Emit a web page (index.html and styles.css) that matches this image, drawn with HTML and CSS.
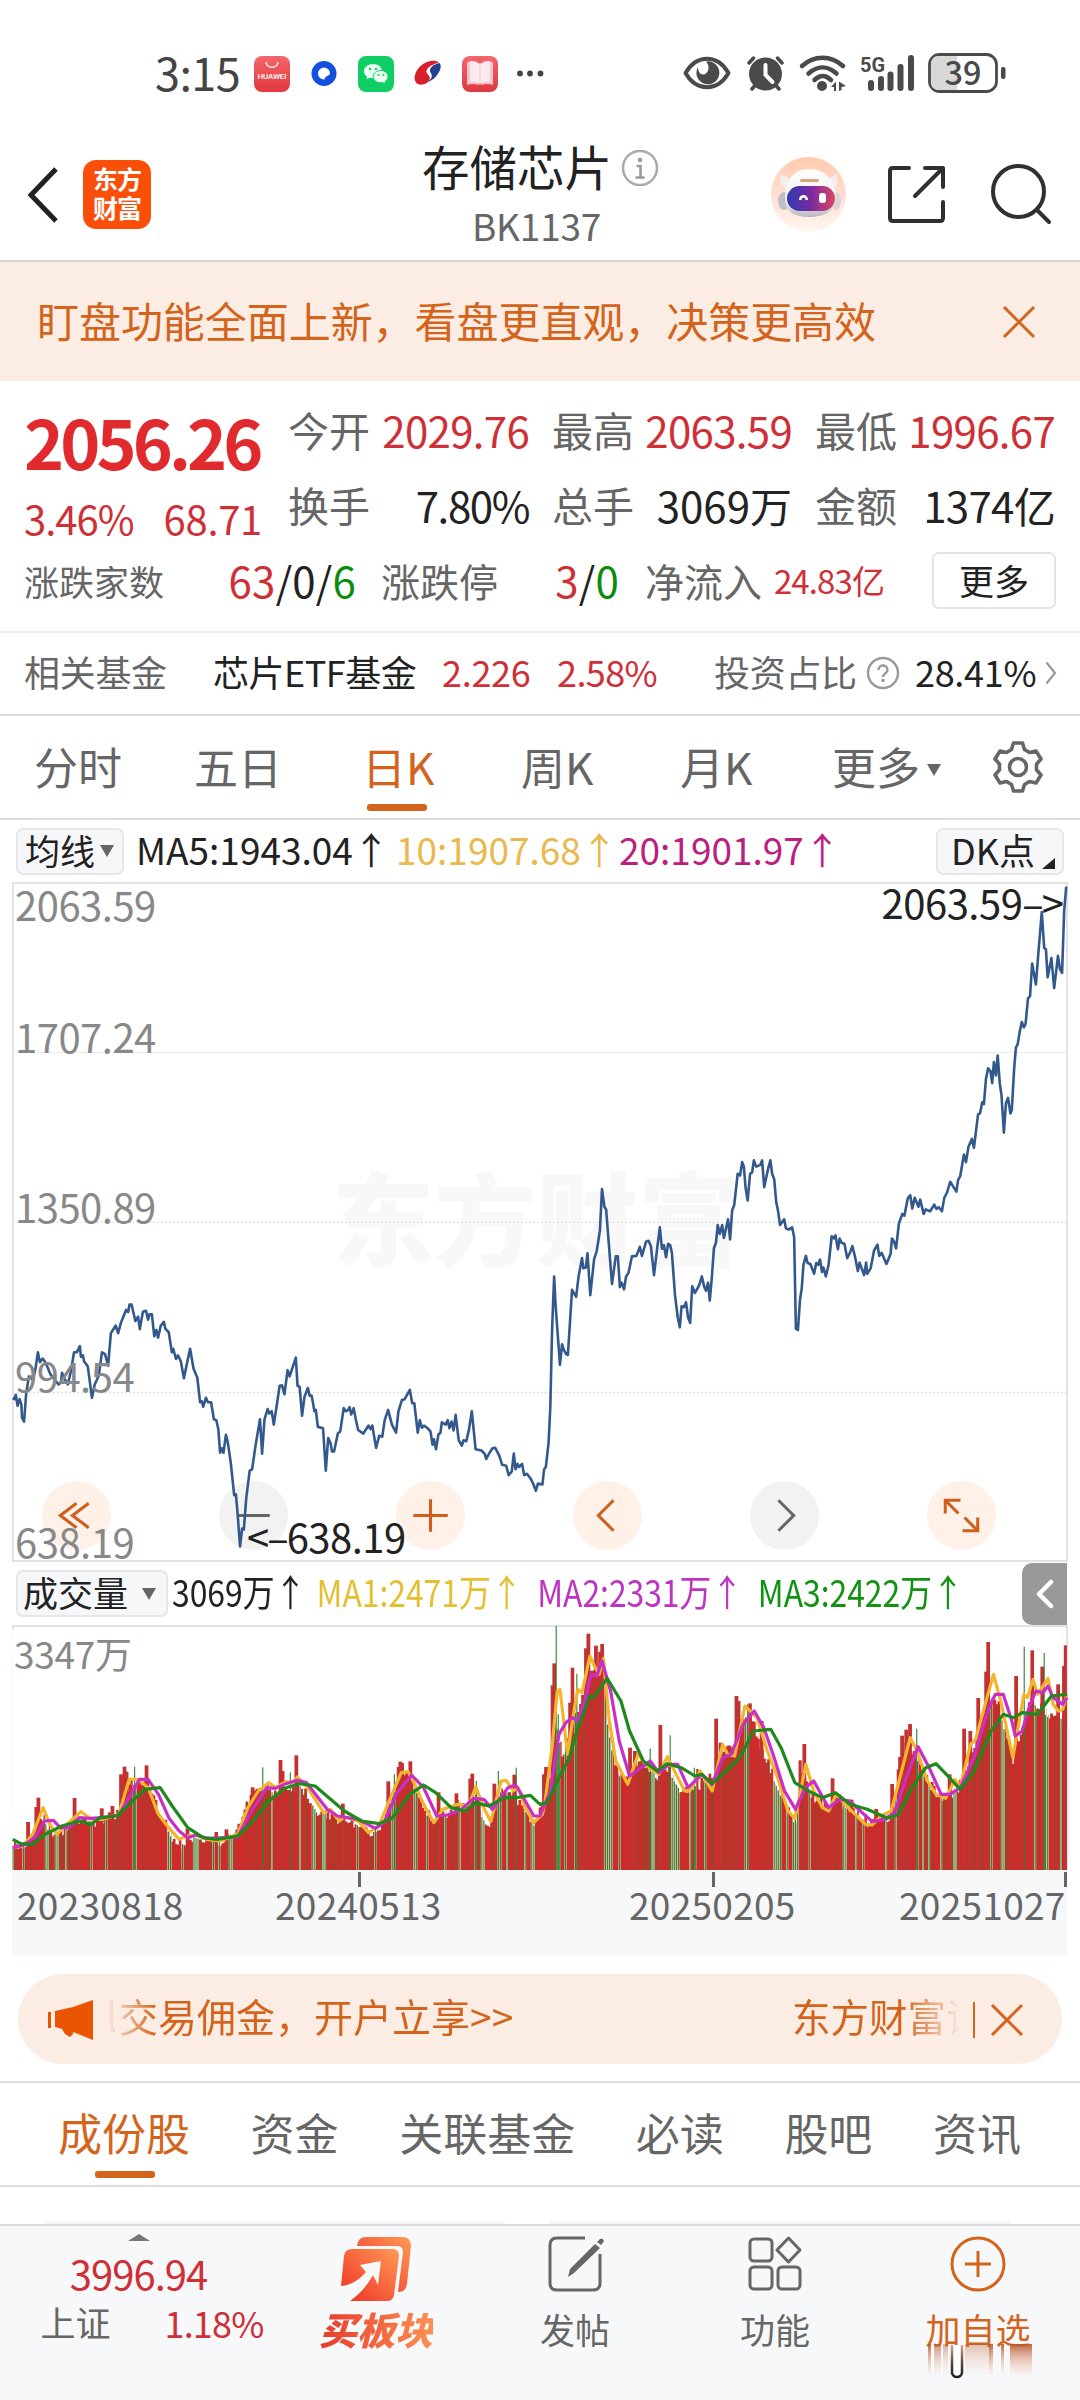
FILE: index.html
```html
<!DOCTYPE html>
<html lang="zh-CN">
<head>
<meta charset="utf-8">
<title>存储芯片 BK1137</title>
<link rel="stylesheet" href="styles.css">
</head>
<body>
<div class="status">
  <span class="clock">3:15</span>
  <svg class="status-apps" viewBox="0 0 300 44" width="300" height="44">
    <defs>
      <linearGradient id="redApp" x1="0" y1="0" x2="0" y2="1"><stop offset="0" stop-color="#f4666a"/><stop offset="1" stop-color="#e2383f"/></linearGradient>
    </defs>
    <rect x="4" y="4" width="36" height="36" rx="8" fill="url(#redApp)"/>
    <path d="M16 10c1 7 11 7 12 0" fill="none" stroke="#fff" stroke-width="1.3"/>
    <text x="7.500" y="27" class="huawei" textLength="29">HUAWEI</text>
    <circle cx="74" cy="21.500" r="12.500" fill="#1450e0"/>
    <path d="M80 21.500a6 6 0 1 0-6 6c1.200-.2.800-2.200 2.200-3s3.800-1.200 3.800-3z" fill="#fff"/>
    <rect x="108" y="4" width="36" height="36" rx="8" fill="#0fce66"/>
    <path d="M123 12c-5 0-9 3.200-9 7.200 0 2.300 1.300 4.200 3.200 5.500l-.8 2.600 3.200-1.500c6 1.500 12-1.500 12.500-6.600 0-4-4-7.200-9.100-7.200z" fill="#e9fff2"/>
    <path d="M131 18.500c-4.500 0-7.800 2.800-7.800 6.200 0 4 4.300 6.800 9.600 5.900l2.800 1.400-.6-2.400c1.900-1.100 3-2.900 3-4.900 0-3.400-2.800-6.200-7-6.200z" fill="#e9fff2" stroke="#0fce66" stroke-width="1"/>
    <g fill="#0fce66"><circle cx="120" cy="17" r="1.200"/><circle cx="126" cy="17" r="1.200"/><circle cx="128.500" cy="23" r="1"/><circle cx="133.500" cy="23" r="1"/></g>
    <path d="M189 10.500c-4-3-13-2-19 4-5 5-7 12-4 16 3 4 11 2 13-2 2-3 0-5-2-7-2-3 1-8 12-11z" fill="#d91f2b"/>
    <path d="M189.500 11c3 3 0 10-4 14-2.500 2.500-5 4-7.500 5 4-4 5-6 2.500-9.500-2-3 1-8 9-9.500z" fill="#23418f"/>
    <rect x="212" y="4" width="36" height="36" rx="8" fill="url(#redApp)"/>
    <path d="M217 10q6-1 12 2v21q-6-2-12 0zM243 10q-6-1-12 2v21q6-2 12 0z" fill="#f6c3d2"/>
    <path d="M220 9q6 0 10 3v20q-4-3-10-2zM240 9q-6 0-10 3v20q4-3 10-2z" fill="#fdeaf1" stroke="#f6ccd9" stroke-width=".6"/>
    <g fill="#444"><circle cx="270" cy="21.500" r="2.900"/><circle cx="280" cy="21.500" r="2.900"/><circle cx="290.500" cy="21.500" r="2.900"/></g>
  </svg>
  <svg class="status-sys" viewBox="680 48 330 48" width="330" height="48">
    <g fill="none" stroke="#4a4a4a" stroke-linecap="round" stroke-linejoin="round">
      <path d="M685.500 73c11-19 32-19 43 0-11 19-32 19-43 0z" stroke-width="4"/>
      <path d="M749 63l4.500-5M782 63l-4.500-5M752 89l3-3.500M779 89l-3-3.500" stroke-width="3.500"/>
      <path d="M802 66c12-11 29-11 41 0" stroke-width="4.500"/>
      <path d="M808.500 73.500c9-8 19-8 28 0" stroke-width="4.500"/>
      <path d="M814.500 80c6-5.500 10.500-5.500 16.500 0" stroke-width="4.500"/>
      <path d="M871 83v5M881 79v9M890.500 74.500v13.500M900.500 67v21M911 58v30" stroke-width="6"/>
      <rect x="929.500" y="54.500" width="67" height="37" rx="10" stroke-width="2.800"/>
    </g>
    <path d="M698 67a11.500 11.500 0 1 0 8-5.500c5 5 2 13-3 13-3 0-5-3-5-7.500z" fill="#4a4a4a"/>
    <circle cx="765.500" cy="74" r="16.500" fill="#4a4a4a"/>
    <path d="M765.500 65v10l7 7" fill="none" stroke="#fff" stroke-width="4" stroke-linecap="round"/>
    <circle cx="822" cy="86" r="5" fill="#4a4a4a"/>
    <path d="M831 87l5-5.500v9.500h-2v-4zM839 91v-9.500l7 4.500-4.500 1v3z" fill="#4a4a4a"/>
    <text x="860" y="72" class="net" textLength="25" lengthAdjust="spacingAndGlyphs">5G</text>
    <path d="M938 56h19v34h-19a7 7 0 0 1-7-7V63a7 7 0 0 1 7-7z" fill="#d8d8d8"/>
    <rect x="1001" y="67" width="4.500" height="12" rx="2" fill="#4a4a4a"/>
    <text x="944.500" y="84.500" class="batt" textLength="37" lengthAdjust="spacingAndGlyphs">39</text>
  </svg>
</div>

<header class="header">
  <svg class="back" width="40" height="62" viewBox="0 0 40 62"><path d="M32 5L7 31l25 26" fill="none" stroke="#222" stroke-width="5"/></svg>
  <div class="logo"><span>东方</span><span>财富</span></div>
  <div class="title">
    <div class="title-line">存储芯片
      <svg width="38" height="38" viewBox="0 0 38 38"><circle cx="19" cy="19" r="17" fill="none" stroke="#aaa" stroke-width="2.500"/><circle cx="19" cy="11" r="2.300" fill="#999"/><path d="M15.500 17h4v11M14.500 28.500h9" fill="none" stroke="#999" stroke-width="2.500"/></svg>
    </div>
    <div class="code">BK1137</div>
  </div>
  <svg class="actions" width="300" height="80" viewBox="760 154 300 80">
    <defs>
      <linearGradient id="halo" x1="0" y1="0" x2="0" y2="1"><stop offset="0" stop-color="#ffc9ae"/><stop offset="1" stop-color="#fff6f1"/></linearGradient>
      <linearGradient id="visor" x1="0" y1="0" x2="1" y2="0"><stop offset="0" stop-color="#2e3cae"/><stop offset=".5" stop-color="#7a2aa2"/><stop offset="1" stop-color="#dd4660"/></linearGradient>
      <linearGradient id="helmet" x1="0" y1="0" x2="0" y2="1"><stop offset="0" stop-color="#fff"/><stop offset=".7" stop-color="#eeebf0"/><stop offset="1" stop-color="#b9b6c0"/></linearGradient>
    </defs>
    <circle cx="808.500" cy="194.500" r="37.500" fill="url(#halo)"/>
    <path d="M780 174l9 4-3 11-5-4zM837 174l-8 4 3 11 5-4z" fill="#f3eeee"/>
    <ellipse cx="784" cy="201" rx="6" ry="9" fill="#bfbcc4"/><ellipse cx="836" cy="201" rx="5" ry="9" fill="#dcd3d8"/>
    <path d="M785 198c0-17 8-29 24-29s27 12 27 28c0 14-11 20-27 20s-24-6-24-19z" fill="url(#helmet)"/>
    <rect x="800" y="179" width="19" height="3" rx="1.500" fill="#dba27f"/>
    <rect x="787" y="186" width="48" height="25" rx="12.500" fill="url(#visor)"/>
    <path d="M800 200c1-5 6-5 7 0" fill="none" stroke="#fff" stroke-width="2.500"/><rect x="819" y="193" width="7" height="10" rx="3" fill="#fff"/>
    <g fill="none" stroke="#303030" stroke-width="4" stroke-linecap="round" stroke-linejoin="round">
      <path d="M909 168h-16q-3 0-3 3v47q0 3 3 3h47q3 0 3-3v-16M925 168h18v19M943 168l-28 28"/>
      <circle cx="1018.500" cy="191.500" r="25.500"/><path d="M1037 210l12 12"/>
    </g>
  </svg>
</header>

<div class="banner">
  <span>盯盘功能全面上新，看盘更直观，决策更高效</span>
  <svg width="34" height="34" viewBox="0 0 34 34"><path d="M2 2l30 30M32 2L2 32" stroke="#d4641c" stroke-width="3"/></svg>
</div>

<section class="quote">
  <div class="quote-top">
    <div class="price-col red">
      <div class="price">2056.26</div>
      <div class="change"><span>3.46%</span><span>68.71</span></div>
    </div>
    <div class="stats">
      <div class="stat"><label>今开</label><b class="red">2029.76</b></div>
      <div class="stat"><label>最高</label><b class="red">2063.59</b></div>
      <div class="stat"><label>最低</label><b class="red">1996.67</b></div>
      <div class="stat"><label>换手</label><b class="tight">7.80%</b></div>
      <div class="stat"><label>总手</label><b class="wide">3069万</b></div>
      <div class="stat"><label>金额</label><b>1374亿</b></div>
    </div>
  </div>
  <div class="breadth">
    <div class="pair p1"><label>涨跌家数</label><b><i class="red">63</i>/0/<i class="green">6</i></b></div>
    <div class="pair p2"><label>涨跌停</label><b><i class="red">3</i>/<i class="green">0</i></b></div>
    <div class="pair p3"><label>净流入</label><b class="red">24.83亿</b></div>
    <button class="more">更多</button>
  </div>
</section>

<div class="fund">
  <label>相关基金</label><span class="f-name">芯片ETF基金</span><span class="f-val red">2.226</span><span class="f-pct red">2.58%</span>
  <label class="f-ratio">投资占比</label>
  <svg class="q" width="34" height="34" viewBox="0 0 34 34"><circle cx="17" cy="17" r="15" fill="none" stroke="#999" stroke-width="2.400"/><path d="M12.500 14c0-6 9-6 9 0 0 3.500-4.500 3.500-4.500 7" fill="none" stroke="#999" stroke-width="2.400"/><circle cx="17" cy="24.500" r="1.700" fill="#999"/></svg>
  <span class="f-num">28.41%</span>
  <svg class="chev" width="12" height="24" viewBox="0 0 12 24"><path d="M1.500 1.500L10 12 1.500 22.500" fill="none" stroke="#999" stroke-width="2.200"/></svg>
</div>

<nav class="periods">
  <span>分时</span><span>五日</span><span class="on">日K</span><span>周K</span><span>月K</span><span class="more-tab">更多<i class="tri"></i></span>
  <svg width="54" height="54" viewBox="0 0 54 54"><g fill="none" stroke="#666" stroke-width="3.600" stroke-linejoin="round"><path d="M22.500 3h9l2 6.500 5 3 6.500-1.500 5 8-4.500 5.200v5.600L50 35l-5 8-6.500-1.500-5 3-2 6.500h-9l-2-6.500-5-3L9 43l-5-8 4.500-5.200v-5.600L4 19l5-8 6.500 1.500 5-3z"/><circle cx="27" cy="27" r="8.500"/></g></svg>
</nav>

<div class="ma-row">
  <span class="pill ma-pill">均线<i class="tri"></i></span>
  <span class="ma ma5">MA5:1943.04↑</span><span class="ma ma10">10:1907.68↑</span><span class="ma ma20">20:1901.97↑</span>
  <span class="pill dk">DK点<i class="corner"></i></span>
</div>

<div class="chart">
  <div class="watermark">东方财富</div>
  <div class="controls">
    <span class="ctl"><svg viewBox="0 0 68 68"><path d="M34 22L18 34l16 12M46 22L30 34l16 12"/></svg></span>
    <span class="ctl gray"><svg viewBox="0 0 68 68"><path d="M18 34h32"/></svg></span>
    <span class="ctl"><svg viewBox="0 0 68 68"><path d="M17 34h34M34 18v32"/></svg></span>
    <span class="ctl"><svg viewBox="0 0 68 68"><path d="M40 19L25 34l15 15"/></svg></span>
    <span class="ctl gray"><svg viewBox="0 0 68 68"><path d="M28 19l15 15-15 15"/></svg></span>
    <span class="ctl"><svg viewBox="0 0 68 68"><path d="M18 32V19h15M19 20l12 12M50 36v13H35M49 48L37 36"/></svg></span>
  </div>
  <svg class="plot" id="price" viewBox="0 0 3136 1568" preserveAspectRatio="none"></svg>
  <span class="lab l1">2063.59</span><span class="lab l2">1707.24</span><span class="lab l3">1350.89</span><span class="lab l4">994.54</span><span class="lab l5">638.19</span>
  <span class="lab mark hi">2063.59<em>–&gt;</em></span><span class="lab mark lo"><em>&lt;–</em>638.19</span>
</div>

<div class="vol-row">
  <span class="pill vol-pill">成交量<i class="tri"></i></span>
  <div class="vol-values"><span>3069万↑</span><span class="v1">MA1:2471万↑</span><span class="v2">MA2:2331万↑</span><span class="v3">MA3:2422万↑</span></div>
  <span class="collapse"><svg width="20" height="30" viewBox="0 0 20 30"><path d="M16 3L4 15l12 12" fill="none" stroke="#fff" stroke-width="4.500" stroke-linecap="round" stroke-linejoin="round"/></svg></span>
</div>
<div class="volume">
  <svg class="plot" id="vol" viewBox="0 195 3136 735" preserveAspectRatio="none"></svg>
  <span class="vol-max">3347万</span>
</div>
<div class="axis"><i class="tick t1"></i><i class="tick t2"></i><i class="tick t3"></i><span class="d0">20230818</span><span class="d1">20240513</span><span class="d2">20250205</span><span class="d3">20251027</span></div>

<div class="notice">
  <svg width="48" height="42" viewBox="0 0 48 42"><path d="M1 13h3v16H1zM8 12l18-4L46 1v40l-20-8v2l-3 3-5-3-3-5-7-2z" fill="#ea5504"/></svg>
  <div class="ticker"><span class="edge">l</span><span class="tk">交易佣金，开户立享&gt;&gt;</span><span class="tk2">东方财富证</span></div>
  <i class="bar"></i>
  <svg width="34" height="34" viewBox="0 0 34 34"><path d="M2 2l30 30M32 2L2 32" stroke="#d4641c" stroke-width="3"/></svg>
</div>

<nav class="sections"><span class="on">成份股</span><span>资金</span><span>关联基金</span><span>必读</span><span>股吧</span><span>资讯</span></nav>
<div class="list-top"><i></i><i></i></div>

<footer class="dock">
  <div class="index"><i class="up"></i><b class="red">3996.94</b><div><span>上证</span><em class="red">1.18%</em></div></div>
  <div class="item buy">
    <svg width="72" height="66" viewBox="0 0 72 66">
      <defs><linearGradient id="buyA" x1="1" y1="0" x2="0" y2="1"><stop offset="0" stop-color="#ff9a55"/><stop offset="1" stop-color="#ef2f24"/></linearGradient></defs>
      <path d="M17 10q1-9 9-9h36q9 0 9 9l-4 38q-1 8-9 8l5-40q0-6-6-6z" fill="url(#buyA)"/>
      <path d="M4 20q1-7 8-7h41q6 0 6 7l-5 39q-1 6-7 6H10c12-9 18-17 23-26l5 10 3-24-21 4 6 7C20 43 12 49 1 50z" fill="url(#buyA)"/>
    </svg>
    <span>买板块</span>
  </div>
  <div class="item">
    <svg width="60" height="60" viewBox="0 0 60 60"><g fill="none" stroke="#666" stroke-width="3"><path d="M40 4H12q-7 0-7 7v38q0 7 7 7h36q7 0 7-7V20"/></g><path d="M50 10l5 4-26 25-6 4 2-8zM52 8l3-3q3-1 4 2l-3 4z" fill="#666"/></svg>
    <span>发帖</span>
  </div>
  <div class="item">
    <svg width="60" height="60" viewBox="0 0 60 60"><g fill="none" stroke="#666" stroke-width="3" stroke-linejoin="round"><rect x="5" y="5" width="22" height="22" rx="4"/><rect x="5" y="33" width="22" height="22" rx="4"/><rect x="33" y="33" width="22" height="22" rx="4"/><path d="M43.500 4L55 16 43.500 28 32 16z"/></g></svg>
    <span>功能</span>
  </div>
  <div class="item add">
    <svg width="60" height="60" viewBox="0 0 60 60"><g fill="none" stroke="#d4641c" stroke-width="3"><circle cx="30" cy="30" r="26"/><path d="M17 30h26M30 17v26"/></g></svg>
    <span>加自选</span>
    <svg class="smear" width="110" height="36" viewBox="0 0 110 36">
      <defs>
        <linearGradient id="sm" x1="0" y1="0" x2="0" y2="1"><stop offset="0" stop-color="#b9592a" stop-opacity=".9"/><stop offset="1" stop-color="#f3c8b4" stop-opacity=".1"/></linearGradient>
        <linearGradient id="hook" x1="0" y1="0" x2="0" y2="1"><stop offset="0" stop-color="#d9a58c"/><stop offset=".6" stop-color="#4a4038"/><stop offset="1" stop-color="#222"/></linearGradient>
      </defs>
      <g fill="url(#sm)"><rect x="3" y="0" width="3" height="31"/><rect x="9" y="0" width="7" height="31" opacity=".7"/><rect x="18" y="0" width="5" height="31" opacity=".5"/><rect x="40" y="0" width="26" height="31" opacity=".4"/><rect x="64" y="0" width="4" height="31"/><rect x="76" y="0" width="3" height="31"/><rect x="85" y="0" width="22" height="31"/></g>
      <path d="M27 1v28q1 4 5 4t5-4V1" fill="#fff" stroke="url(#hook)" stroke-width="2.500"/>
    </svg>
  </div>
</footer>
<script src="chart.js"></script>
</body>
</html>
```
FILE: styles.css
```css
* { box-sizing: border-box; }
body {
  margin: 0; width: 1080px; height: 2400px; overflow: hidden; background: #fff;
  display: flex; flex-direction: column; color: #222;
  font-family: "Noto Sans CJK SC", sans-serif; line-height: 1; white-space: nowrap;
}
i, em { font-style: normal; }
b { font-weight: 400; }
svg { display: block; flex: none; }
label { color: #666; }
.red { color: #cf2f36; }
.green { color: #0c8c0c; }

.status { height: 110px; flex: none; display: flex; align-items: flex-start; padding: 50px 0 0 155px; }
.clock { width: 95px; font-size: 45px; letter-spacing: -.600px; color: #444; line-height: 43px; }
.status-apps { margin-top: 2px; }
.status-sys { margin: -2px 0 0 130px; }
.huawei { font: 500 8px Roboto, sans-serif; fill: #fff; }
.net { font: 700 21px Roboto, sans-serif; fill: #4a4a4a; }
.batt { font: 500 33px "Noto Sans CJK SC", sans-serif; fill: #4a4a4a; }

.header { height: 152px; flex: none; display: flex; border-bottom: 2px solid #d9d6d4; padding-left: 24px; }
.back { margin-top: 54px; }
.logo { width: 68px; height: 69px; margin: 50px 0 0 19px; border-radius: 13px; background: #fb4e09; color: #fff; font-size: 25px; font-weight: 700; line-height: 29px; display: flex; flex-direction: column; align-items: center; padding-top: 4px; letter-spacing: -1px; }
.title { width: 236px; margin-left: 271px; padding-top: 30px; }
.title-line { display: flex; align-items: center; gap: 9px; font-size: 47.500px; height: 52px; }
.title-line svg { margin-top: 3px; }
.code { margin-top: 15px; padding-left: 50px; font-size: 37px; color: #666; letter-spacing: -.200px; }
.actions { margin: 44px 0 0 102px; }

.banner { height: 119px; flex: none; background: #fcede4; display: flex; justify-content: space-between; align-items: center; padding: 0 44px 4px 37px; font-size: 42px; letter-spacing: -.050px; color: #d4641c; }
.banner svg { margin-top: 4px; }

.quote { height: 252px; flex: none; border-bottom: 2px solid #eee; }
.quote-top { display: flex; height: 165px; padding-left: 24px; }
.price-col { width: 236px; padding-top: 26px; }
.price { font-size: 68px; font-weight: 700; color: #e02a2e; letter-spacing: -3.900px; }
.change { display: flex; justify-content: space-between; font-size: 40px; letter-spacing: -1px; margin-top: 23px; }
.change span:last-child { letter-spacing: -.300px; margin-right: -2px; }
.stats { display: grid; grid-template-columns: 239px 238px 238px; column-gap: 25px; grid-template-rows: 75px 75px; padding-top: 11px; margin-left: 28px; }
.stat { display: flex; justify-content: space-between; align-items: center; font-size: 42px; }
.stat label { font-size: 41px; }
.stat b { letter-spacing: -.700px; margin-right: -2px; }
.stat .tight { letter-spacing: -1.400px; }
.stat .wide { letter-spacing: 0; }
.breadth { display: flex; align-items: center; padding-left: 24px; height: 68px; }
.pair { display: flex; justify-content: space-between; align-items: center; font-size: 42px; letter-spacing: .200px; }
.p1 { width: 332px; } .p1 label { font-size: 35px; letter-spacing: 0; }
.p2 { width: 238px; margin-left: 25px; } .p2 label, .p3 label { font-size: 39px; letter-spacing: 0; }
.p3 { width: 239px; margin-left: 26px; } .p3 b { font-size: 33px; letter-spacing: -.900px; }
.more { width: 124px; height: 57px; margin-left: 48px; border: 2px solid #e4e4e4; border-radius: 7px; background: #fff; font: 35px/48px "Noto Sans CJK SC", sans-serif; color: #222; padding: 0; }

.fund { height: 83px; flex: none; display: flex; align-items: center; border-bottom: 2px solid #ddd; padding: 0 0 6px 24px; font-size: 36px; letter-spacing: -.300px; }
.fund > * { flex: none; }
.fund > label:first-child { width: 189px; }
.f-name { width: 229px; letter-spacing: -.500px; }
.f-val { width: 115px; } .f-pct { width: 157px; letter-spacing: -.600px; }
.f-ratio { width: 152px; }
.q { margin-right: 15px; margin-top: 4px; }
.f-num { width: 130px; } .chev { margin-top: 4px; }

.periods { height: 104px; flex: none; display: grid; grid-template-columns: 160px 168px 159px 159px 152px 159px 54px; align-items: center; padding-left: 34px; border-bottom: 2px solid #ddd; font-size: 44px; color: #666; }
.periods > span { height: 102px; line-height: 100px; position: relative; }
.on { color: #d4641c; }
.on::after { content: ""; position: absolute; width: 60px; height: 7px; border-radius: 3px; background: #d4641c; left: 5px; bottom: 7px; }
.tri { display: inline-block; border: 7px solid transparent; border-top: 12px solid #666; border-bottom: 0; }
.more-tab .tri { margin-left: 7px; vertical-align: 9px; }

.ma-row { height: 62px; flex: none; display: flex; align-items: center; padding: 0 16px 0 16px; font-size: 37px; }
.pill { background: #f6f7f9; border: 2px solid #e5e7ea; border-radius: 7px; height: 47px; display: flex; align-items: center; padding-bottom: 4px; }
.pill .tri { margin-top: 4px; }
.ma-pill { width: 108px; font-size: 35px; padding-left: 7px; gap: 5px; margin-right: 12px; }
.ma { padding-bottom: 3px; }
.ma5 { width: 260px; } .ma10 { width: 223px; color: #e9b94e; } .ma20 { color: #bb1f80; }
.ma5, .ma10, .ma20 { flex: none; }
.dk { width: 128px; font-size: 36px; padding-left: 13px; margin-left: auto; gap: 7px; }
.corner { border-left: 13px solid transparent; border-bottom: 11px solid #222; align-self: flex-end; }

.chart { position: relative; height: 680px; flex: none; margin: 0 12px; border: 2px solid #e2e2e2; }
.plot { position: absolute; left: -14px; width: 1080px; overflow: visible; }
#price { top: -4px; height: 700px; }
.watermark { position: absolute; left: 318px; top: 280px; font-size: 102px; font-weight: 900; color: #f8f8f8; }
.controls { position: absolute; left: 28px; right: 70px; top: 597px; display: flex; justify-content: space-between; }
.ctl { width: 69px; height: 69px; border-radius: 50%; background: #fff0e8; }
.ctl.gray { background: #f2f2f2; }
.ctl path { fill: none; stroke: #cf5f1c; stroke-width: 3; }
.ctl.gray path { stroke: #666; }
.lab { position: absolute; left: 1px; font-size: 40px; letter-spacing: -.500px; color: #888; }
.l1 { top: 0; } .l2 { top: 132px; } .l3 { top: 302px; } .l4 { top: 471px; } .l5 { top: 637px; }
.mark { color: #222; }
.hi { left: auto; right: 4px; top: -2px; } .lo { left: 233px; top: 632px; }
.lab em { letter-spacing: -2px; }

.vol-row { height: 63px; flex: none; display: flex; align-items: center; padding: 0 13px 0 16px; font-size: 37px; }
.vol-pill { width: 152px; font-size: 35px; padding-left: 5px; gap: 14px; }
.vol-values { display: flex; gap: 17px; margin-left: 4px; width: 850px; padding-bottom: 4px; transform: scaleX(.86); transform-origin: left; }
.v1 { color: #e6bf31; margin-left: -5px; } .v2 { color: #bd33c4; } .v3 { color: #129212; }
.collapse { width: 45px; height: 62px; background: #999; border-radius: 10px 0 0 10px; display: flex; align-items: center; justify-content: center; margin-left: auto; flex: none; }
.volume { position: relative; height: 245px; flex: none; margin: 0 12px; border: 2px solid #e2e2e2; border-bottom: 0; }
#vol { top: -1px; height: 245px; }
.vol-max { position: absolute; left: 0; top: 8px; font-size: 37px; color: #888; letter-spacing: -.300px; }
.axis { position: relative; height: 86px; flex: none; margin: 0 13px 0 12px; background: #f7f8fa; font-size: 37px; color: #666; display: flex; letter-spacing: .300px; padding-top: 16px; }
.axis span { width: 166px; flex: none; }
.d0 { margin-left: 5px; } .d1 { margin-left: 92px; } .d2 { margin-left: 188px; } .d3 { margin-left: 104px; }
.tick { position: absolute; top: 2px; width: 3px; height: 15px; background: #666; }
.t1 { left: 346px; } .t2 { left: 700px; } .t3 { right: 0; }

.notice { height: 90px; margin: 18px; margin-bottom: 17px; flex: none; border-radius: 45px; background: #fcede4; display: flex; align-items: center; padding: 0 38px 2px 29px; color: #d4641c; font-size: 39px; }
.ticker { display: flex; width: 856px; margin-left: 11px; overflow: hidden; height: 50px; line-height: 44px; -webkit-mask: linear-gradient(90deg, transparent 0, #000 50px, #000 795px, transparent 856px); mask: linear-gradient(90deg, transparent 0, #000 50px, #000 795px, transparent 856px); }
.ticker span { flex: none; }
.edge { width: 13px; } .tk { width: 673px; } .tk2 { font-size: 38.500px; }
.bar { width: 2px; height: 36px; background: #d4641c; margin: 4px 15px 0 14px; }
.notice svg { margin-top: 3px; }

.sections { height: 106px; flex: none; border-top: 2px solid #ddd; border-bottom: 2px solid #ddd; display: flex; justify-content: space-between; padding: 0 59px 0 58px; font-size: 44px; color: #666; line-height: 99px; }
.sections span { position: relative; }
.sections .on::after { left: 37px; bottom: 7px; }
.sections .on { height: 102px; }
.list-top { height: 37px; flex: none; display: flex; align-items: flex-end; gap: 45px; padding-left: 45px; }
.list-top i { width: 460px; height: 3px; background: #f7f7f7; }

.dock { height: 176px; flex: none; background: #f6f8fa; border-top: 2px solid #dadcde; display: flex; position: relative; color: #666; font-size: 35px; }
.index { width: 277px; padding-top: 8px; display: flex; flex-direction: column; align-items: center; }
.up { border: 11px solid transparent; border-bottom: 7px solid #777; border-top: 0; }
.index b { font-size: 40px; letter-spacing: -1px; margin-top: 12px; }
.index div { display: flex; gap: 54px; margin: 11px 0 0 27px; }
.index em { font-size: 36px; letter-spacing: -.800px; }
.item { width: 200px; padding-top: 8px; display: flex; flex-direction: column; align-items: center; gap: 17px; position: relative; }
.buy { width: 198px; padding-top: 10px; gap: 7px; }
.buy span { font-size: 38px; font-weight: 900; font-style: italic; background: linear-gradient(90deg, #e93a2c, #fb9152); -webkit-background-clip: text; background-clip: text; color: transparent; line-height: 40px; }
.item:last-child { color: #d4641c; }
.add { margin-left: 3px; }
.smear { position: absolute; left: 47px; top: 118px; }
```
FILE: chart.js
```js
const NS = 'http://www.w3.org/2000/svg';
const W = 1568;

function parse(left, right) {
  const read = (s, dx) => s.trim().split(/\s+/).map(p => {
    const [x, y] = p.split(',').map(Number);
    return [x + dx, y];
  });
  return read(left, 0).concat(read(right, W));
}
function add(svg, tag, attrs) {
  const el = document.createElementNS(NS, tag);
  for (const k in attrs) el.setAttribute(k, attrs[k]);
  svg.appendChild(el);
}
function line(svg, pts, color, width) {
  add(svg, 'polyline', { points: pts.map(p => p.join(',')).join(' '), fill: 'none', stroke: color, 'stroke-width': width, 'vector-effect': 'non-scaling-stroke', 'stroke-linejoin': 'round' });
}

// Daily closing price
const price = parse(`37,1160 42,1163 46,1153 51,1178 57,1163 62,1175 64,1205 70,1213 76,1150 84,1112 96,1120 103,1095 110,1058 116,1080 124,1072 133,1082 147,1108 170,1130 177,1125 180,1104 188,1118 197,1130 206,1100 215,1058 223,1058 232,1044 235,1068 241,1065 244,1078 255,1090 267,1160 275,1130 287,1110 296,1058 305,1062 314,1088 322,1015 336,998 343,1015 352,990 366,963 372,968 376,951 382,951 393,988 401,978 406,1006 415,967 424,965 430,985 434,973 441,973 448,1022 454,1008 459,1025 467,998 476,990 480,1005 490,1013 499,1058 503,1050 511,1073 517,1065 525,1078 534,1116 541,1090 552,1050 562,1095 573,1115 581,1170 586,1168 590,1180 598,1160 604,1170 613,1170 621,1208 628,1210 634,1230 639,1283 644,1273 649,1283 656,1243 662,1262 670,1305 680,1378 685,1376 690,1420 697,1493 703,1453 708,1455 715,1385 725,1323 732,1320 743,1262 755,1208 761,1285 768,1208 777,1185 782,1195 789,1190 795,1220 804,1175 812,1133 819,1132 826,1152 835,1098 841,1112 859,1070 864,1133 870,1135 877,1200 884,1158 894,1138 899,1155 905,1155 913,1190 917,1187 923,1225 938,1228 946,1323 953,1250 960,1262 964,1280 970,1280 981,1240 988,1235 998,1183 1004,1190 1011,1187 1015,1181 1020,1197 1027,1183 1033,1208 1040,1232 1055,1240 1070,1222 1076,1230 1081,1222 1092,1272 1101,1245 1110,1247 1117,1210 1127,1187 1138,1220 1150,1238 1157,1190 1167,1165 1175,1163 1190,1142 1197,1172 1203,1172 1213,1238 1219,1210 1225,1227 1231,1222 1240,1227 1250,1235 1256,1265 1260,1253 1266,1275 1273,1242 1279,1238 1283,1215 1294,1220 1300,1210 1305,1228 1311,1213 1317,1233 1323,1198 1332,1255 1341,1267 1346,1255 1354,1257 1362,1230 1370,1190 1381,1275 1398,1278 1407,1285 1412,1297 1420,1285 1430,1273 1438,1272 1450,1290 1458,1310 1470,1312 1477,1333 1486,1325 1492,1285 1497,1320 1503,1308 1507,1315 1516,1308 1522,1333 1530,1330 1540,1340 1547,1350 1556,1368 1562,1352`,
`7,1354 12,1320 17,1315 25,1260 30,1180 35,1010 41,888 45,950 58,1086 64,1040 69,1052 76,1062 81,1064 93,918 105,934 112,888 122,847 126,870 133,868 138,836 146,930 157,850 165,830 174,785 180,692 187,732 192,738 209,905 220,843 226,843 232,912 237,902 244,917 250,888 257,880 267,843 280,842 290,822 296,842 308,810 315,808 322,820 331,885 341,820 348,778 354,826 360,818 366,845 372,815 378,818 383,835 392,930 400,980 406,1002 411,955 418,957 424,946 430,980 436,992 442,910 450,925 462,908 470,888 477,912 482,920 488,902 493,942 499,890 505,825 511,812 516,773 522,793 529,773 534,802 546,760 552,805 558,740 564,728 574,658 581,662 587,632 592,642 597,690 603,718 610,658 616,655 621,628 628,642 640,638 645,628 651,688 662,648 669,628 674,658 680,670 686,722 691,740 697,773 709,760 714,780 722,783 732,778 738,800 743,1005 749,1008 755,940 760,915 765,862 772,842 777,858 785,860 796,882 802,858 808,862 813,850 819,878 823,868 830,888 838,862 847,798 853,803 858,796 865,827 870,803 876,813 884,815 892,847 900,835 907,820 915,845 923,876 928,857 935,872 941,885 947,857 950,882 960,870 970,830 980,817 985,842 992,835 1006,860 1018,838 1022,803 1028,810 1034,825 1042,770 1052,748 1058,752 1068,713 1075,706 1081,736 1088,712 1099,732 1104,716 1114,748 1120,738 1133,742 1145,727 1151,737 1158,733 1167,742 1174,712 1182,700 1191,676 1209,698 1214,672 1220,664 1231,615 1237,632 1244,598 1254,580 1260,600 1272,525 1278,522 1284,498 1289,502 1295,445 1301,422 1308,428 1313,455 1318,408 1324,438 1329,393 1335,455 1340,482 1347,566 1353,500 1359,488 1366,523 1370,515 1377,420 1382,375 1387,368 1393,340 1399,318 1405,330 1410,322 1417,265 1423,260 1429,187 1440,234 1447,165 1457,72 1464,152 1469,155 1474,218 1485,175 1493,242 1504,170 1510,200 1516,208 1522,70 1528,15`);

const ps = document.getElementById('price');
[386, 767, 1148].forEach(y => add(ps, 'path', { d: `M37 ${y}H3098`, stroke: '#dedede', 'stroke-width': 1.3, 'stroke-dasharray': '2 2', 'vector-effect': 'non-scaling-stroke' }));
line(ps, price, '#33598c', 2.6);

// Volume: outline of the bars, then single-day peaks
const outline = parse(`37,855 70,848 85,830 105,770 125,760 140,805 165,810 190,800 205,780 235,765 255,770 275,785 300,765 345,760 360,680 375,670 400,665 430,670 445,720 460,745 480,785 500,835 530,845 560,825 600,835 640,835 680,825 700,760 730,700 760,680 790,690 810,680 870,670 890,700 920,750 950,755 980,780 1010,770 1040,790 1070,812 1100,790 1130,720 1160,640 1180,640 1200,670 1225,730 1255,785 1285,760 1330,730 1360,735 1385,690 1400,770 1425,790 1445,690 1480,690 1510,725 1550,790`,
`0,740 20,680 35,600 50,500 60,570 80,540 100,460 125,390 145,310 165,330 185,300 195,480 215,610 240,660 260,620 300,610 340,640 360,610 380,640 410,690 440,680 480,650 500,650 530,570 560,560 580,470 610,460 640,560 660,610 690,680 720,755 740,785 760,640 790,710 830,740 860,700 890,740 950,780 980,770 1010,770 1030,700 1055,560 1080,560 1110,630 1150,705 1180,700 1210,680 1240,600 1260,550 1290,430 1320,400 1340,470 1370,600 1390,520 1420,420 1440,430 1480,470 1510,480 1532,400`);
const redPeaks = parse('82,783 112,710 106,738 217,711 296,742 327,735 352,640 362,617 368,632 426,613 545,803 628,813 658,805 734,679 815,597 821,630 861,583 996,728 1128,661 1158,618 1163,602 1168,606 1192,601 1274,694 1326,697 1366,653 1372,638 1436,668 1494,641',
'12,640 18,618 37,373 42,307 88,425 95,320 134,262 141,218 163,254 175,272 181,249 262,560 276,570 350,492 455,624 512,473 525,545 571,405 577,420 610,427 644,480 755,598 768,549 850,652 905,716 977,744 1023,669 1040,625 1046,588 1052,524 1064,506 1075,489 1190,640 1232,503 1250,510 1273,411 1296,332 1302,243 1383,345 1430,268 1459,317 1505,370 1522,315 1527,253');
const greenPeaks = parse('391,617 763,619 843,634 1145,640 1383,660 1447,630 1499,620', '47,195 53,460 107,338 320,563 378,523 448,620 603,430 1094,503 1406,257 1464,276');
const gaps = '38 68 133 139 162 168 192 266 309 388 394 489 495 530 563 569 575 620 637 667 673 790 871 908 914 938 944 1038 1090 1139 1145 1203 1209 1241 1293 1335 1381 1399 1405 1447 1453 1472 1525 1544 1550 1618 1624 1642 1671 1758 1764 1770 1776 1799 1893 1899 1952 1958 1964 1970 2004 2019 2048 2165 2170 2248 2254 2260 2266 2286 2304 2310 2316 2351 2450 2456 2486 2507 2573 2601 2664 2680 2698 2733 2770 2776 2879 2909 2915 3006 3036 3042 3081'.split(' ').map(Number);

function at(pts, x) {
  for (let i = 1; i < pts.length; i++) {
    if (x <= pts[i][0]) {
      const [x0, y0] = pts[i - 1], [x1, y1] = pts[i];
      return y0 + (y1 - y0) * (x - x0) / (x1 - x0);
    }
  }
  return pts[pts.length - 1][1];
}
const vs = document.getElementById('vol');
const BASE = 929;
let seed = 7;
const rnd = () => (seed = (seed * 16807) % 2147483647) / 2147483647;
for (let x = 38; x < 3094; x += 5.87) {
  const y = at(outline, x) + (rnd() - .4) * 36;
  add(vs, 'rect', { x, y, width: Math.min(8, 3098 - x), height: BASE - y, fill: rnd() < .3 ? '#aa3c28' : '#ce2b2b' });
}
redPeaks.forEach(([x, y]) => add(vs, 'rect', { x: x - 6, y, width: Math.min(11, 3104 - x), height: BASE - y, fill: '#c23230' }));
gaps.forEach(x => {
  const y = at(outline, x) + 4;
  add(vs, 'rect', { x: x - 2.7, y: 205, width: 5.4, height: BASE - 205, fill: '#fff' });
  add(vs, 'rect', { x: x - 1.6, y, width: 3.3, height: BASE - y, fill: '#2f8428' });
});
greenPeaks.forEach(([x, y]) => add(vs, 'rect', { x: x - 1.6, y, width: 3.2, height: BASE - y, fill: '#2c8030' }));

const ma3 = parse('37,835 60,848 95,850 130,820 180,795 230,780 265,790 290,770 340,765 380,725 420,685 465,680 500,735 545,800 590,830 630,835 690,825 730,785 780,720 830,680 870,668 915,675 960,715 1000,750 1050,780 1100,788 1140,770 1190,700 1230,672 1265,695 1310,740 1350,750 1380,725 1420,735 1465,710 1500,710 1540,703 1568,730',
'20,725 50,660 85,590 110,500 145,405 155,410 195,352 235,420 260,510 300,600 340,630 370,608 410,620 450,645 470,640 500,668 540,630 580,590 620,510 670,505 700,560 740,665 780,690 820,710 858,695 900,730 950,745 1010,772 1040,760 1080,680 1120,620 1150,608 1180,640 1220,685 1260,630 1310,510 1345,460 1375,470 1400,455 1445,460 1485,405 1530,400');
const ma2 = parse('37,860 70,852 100,830 130,780 155,778 175,800 200,800 230,770 260,772 300,770 345,762 380,700 405,655 430,655 460,700 490,770 520,810 545,830 570,822 600,832 690,828 730,750 775,680 800,682 830,668 863,658 890,665 920,705 950,745 980,765 1040,775 1090,802 1115,785 1150,700 1195,642 1230,680 1268,765 1300,762 1340,745 1375,712 1405,715 1430,745 1450,715 1475,680 1497,672 1520,710 1550,765',
'0,765 30,690 55,520 75,485 95,470 110,480 130,420 148,340 165,345 180,300 205,390 230,540 260,645 300,615 320,600 345,635 375,610 400,610 430,680 470,640 500,670 530,590 555,580 590,490 622,450 650,500 680,590 710,690 742,745 770,680 795,660 838,740 870,715 900,720 930,750 965,782 1000,775 1030,755 1060,660 1098,557 1130,620 1165,700 1190,700 1220,680 1260,590 1300,450 1322,400 1345,400 1370,480 1380,525 1400,510 1420,440 1440,390 1460,395 1475,375 1490,410 1518,430 1530,410');
const ma1 = parse('37,860 65,855 95,820 125,740 145,790 165,820 200,785 235,752 265,775 300,775 345,760 375,655 400,655 430,680 460,760 490,800 520,835 545,825 570,822 600,835 640,840 690,820 720,740 750,690 780,665 800,680 830,662 850,665 863,648 890,675 915,715 940,755 960,745 985,780 1000,768 1040,780 1070,815 1100,795 1130,720 1165,635 1185,632 1200,660 1230,730 1260,785 1285,745 1330,730 1360,735 1382,677 1400,730 1425,782 1455,660 1470,658 1490,690 1505,680 1525,740 1550,785',
'7,760 15,720 35,560 50,390 58,385 80,580 100,440 110,385 122,395 145,285 158,315 172,340 184,293 200,470 220,600 255,670 285,580 310,615 345,640 370,587 400,650 420,690 435,690 465,630 500,690 530,550 545,580 565,585 595,435 630,470 660,570 690,650 720,750 740,772 755,700 772,610 795,690 820,740 838,750 860,700 900,745 945,790 965,792 990,765 1020,750 1050,630 1075,530 1095,570 1125,660 1150,700 1178,712 1205,655 1220,680 1250,550 1265,535 1290,440 1317,340 1340,430 1373,590 1405,400 1415,410 1432,355 1445,400 1475,352 1490,430 1505,450 1518,445 1530,400');
line(vs, ma1, '#f3b52c', 3.2);
line(vs, ma2, '#c92fc6', 3.2);
line(vs, ma3, '#1f8a1c', 3.2);
```
